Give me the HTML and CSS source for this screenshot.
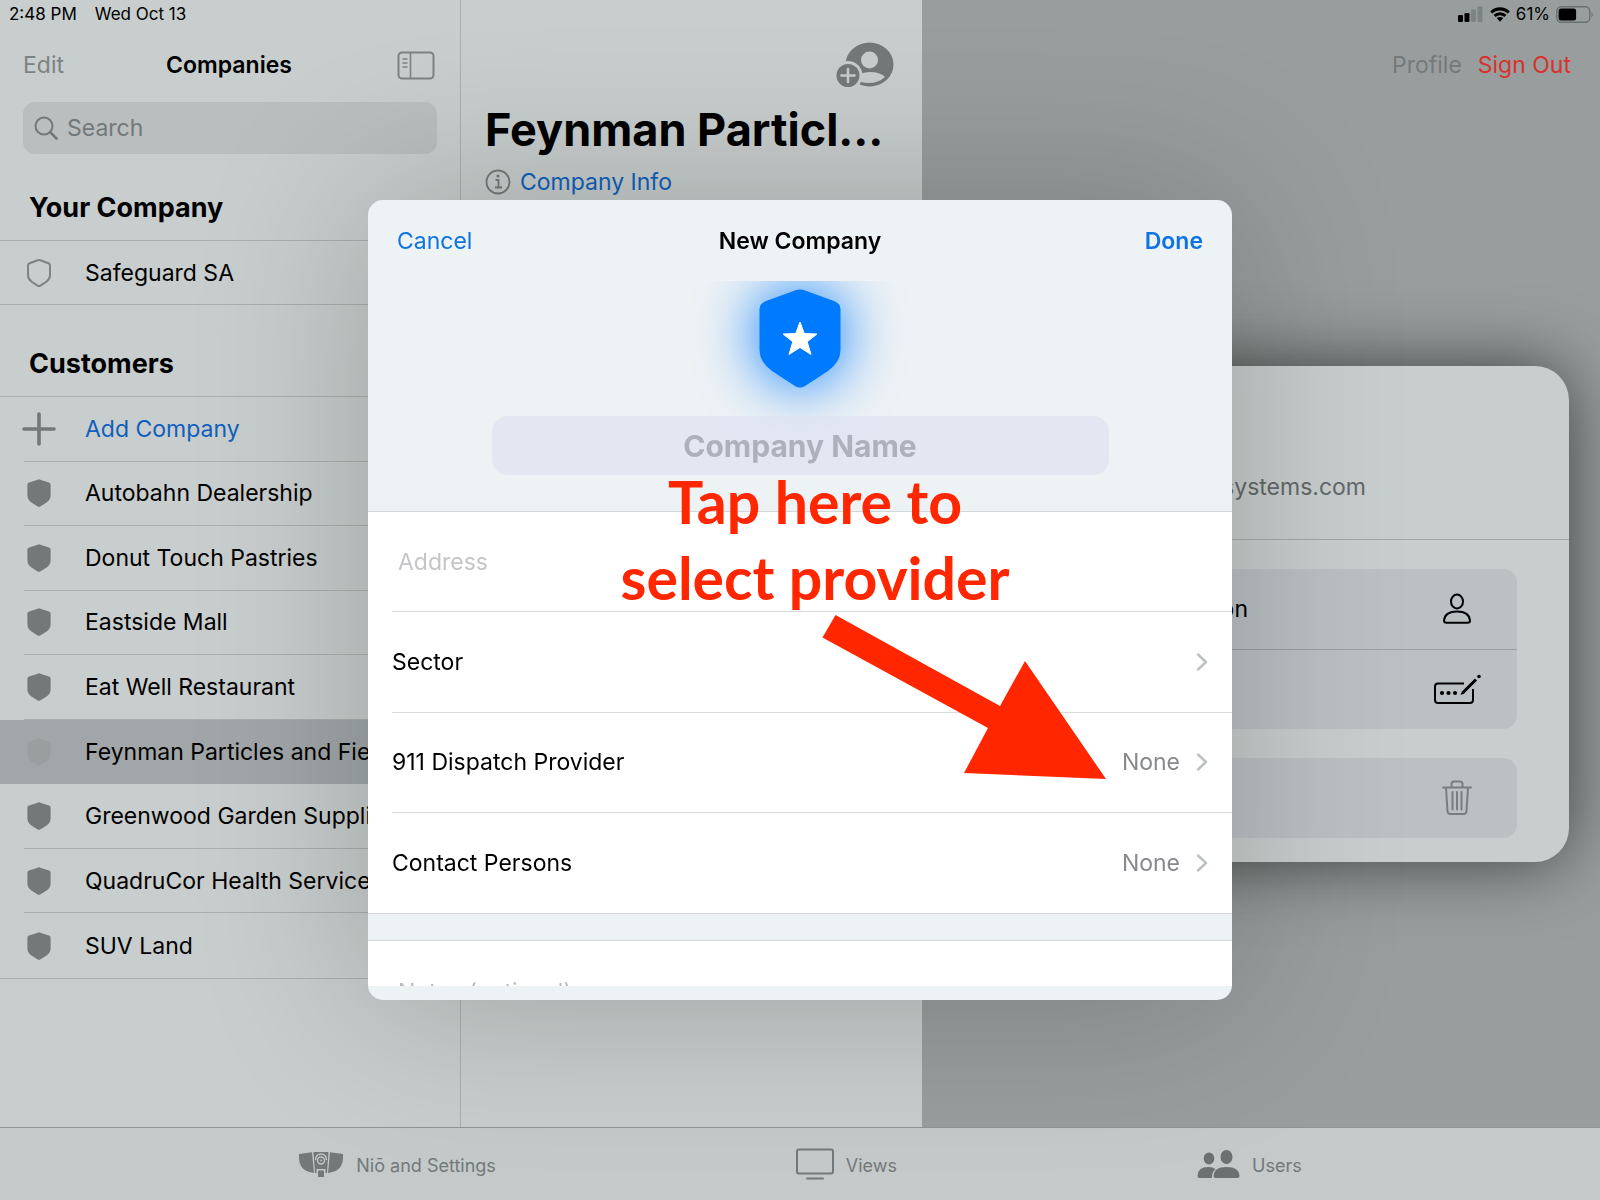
FILE: index.html
```html
<!DOCTYPE html>
<html lang="en">
<head>
<meta charset="utf-8">
<meta name="viewport" content="width=device-width, initial-scale=1">
<title>New Company</title>
<link rel="stylesheet" href="styles.css">
</head>
<body>
<svg class="defs" aria-hidden="true">
  <symbol id="shield" viewBox="0 0 24 28"><path d="M12 0.3Q12.7 0.3 14 0.9L22 3.6Q23.6 4.2 23.6 5.8V16.5Q23.6 20.5 19.6 23.4L13.6 27.2Q12 28.2 10.4 27.2L4.4 23.4Q0.4 20.5 0.4 16.5V5.8Q0.4 4.2 2 3.6L10 0.9Q11.3 0.3 12 0.3Z"/></symbol>
  <symbol id="chevron" viewBox="0 0 12 18"><path d="M2 1.5L10 9L2 16.5" fill="none" stroke="currentColor" stroke-width="2.4" stroke-linecap="round" stroke-linejoin="round"/></symbol>
</svg>
<div class="app">
  <div class="columns">
    <aside class="sidebar">
      <div class="status"><span>2:48 PM</span><span>Wed Oct 13</span></div>
      <div class="navbar">
        <button class="plain muted" type="button">Edit</button>
        <h1 class="nav-title">Companies</h1>
        <button class="plain muted icon-button" type="button" aria-label="Toggle sidebar">
          <svg width="38" height="29" viewBox="0 0 38 29" fill="none" stroke="currentColor" stroke-width="2"><rect x="1.5" y="1.5" width="35" height="26" rx="3.5"/><path d="M13.5 1.5V27.5M5.5 8H10.500M5.500 12H10.500M5.500 16H10.500" stroke-width="1.6"/></svg>
        </button>
      </div>
      <label class="search">
        <svg width="24" height="24" viewBox="0 0 24 24" fill="none" stroke="currentColor" stroke-width="2" stroke-linecap="round"><circle cx="10" cy="10" r="8.500"/><path d="M16.200 16.200L22.500 22.500" stroke-width="2.600"/></svg>
        <input type="search" placeholder="Search" aria-label="Search">
      </label>
      <h2 class="section">Your Company</h2>
      <ul class="list own">
        <li><a class="row" href="#"><svg class="row-icon outline" width="24" height="28" viewBox="0 0 24 28"><path d="M12 1Q12.700 1 14 1.500L21.500 4.200Q23 4.800 23 6.200V16.500Q23 20 19.300 22.800L13.400 26.600Q12 27.500 10.600 26.600L4.700 22.800Q1 20 1 16.500V6.200Q1 4.800 2.500 4.200L10 1.500Q11.300 1 12 1Z"/></svg>Safeguard SA</a></li>
      </ul>
      <h2 class="section">Customers</h2>
      <ul class="list customers">
        <li><a class="row add" href="#"><svg class="row-icon" width="34" height="34" viewBox="0 0 34 34" fill="none" stroke="#737979" stroke-width="3.600" stroke-linecap="round"><path d="M17 2V32M2 17H32"/></svg>Add Company</a></li>
        <li><a class="row" href="#"><svg class="row-icon" width="24" height="28"><use href="#shield"/></svg>Autobahn Dealership</a></li>
        <li><a class="row" href="#"><svg class="row-icon" width="24" height="28"><use href="#shield"/></svg>Donut Touch Pastries</a></li>
        <li><a class="row" href="#"><svg class="row-icon" width="24" height="28"><use href="#shield"/></svg>Eastside Mall</a></li>
        <li><a class="row" href="#"><svg class="row-icon" width="24" height="28"><use href="#shield"/></svg>Eat Well Restaurant</a></li>
        <li class="selected"><a class="row" href="#"><svg class="row-icon" width="24" height="28"><use href="#shield"/></svg>Feynman Particles and Fields</a></li>
        <li><a class="row" href="#"><svg class="row-icon" width="24" height="28"><use href="#shield"/></svg>Greenwood Garden Supplies</a></li>
        <li><a class="row" href="#"><svg class="row-icon" width="24" height="28"><use href="#shield"/></svg>QuadruCor Health Services</a></li>
        <li><a class="row" href="#"><svg class="row-icon" width="24" height="28"><use href="#shield"/></svg>SUV Land</a></li>
      </ul>
    </aside>

    <section class="company">
      <div class="company-bar">
        <button class="plain icon-button add-user" type="button" aria-label="Add user">
          <svg width="58" height="46" viewBox="0 0 58 46"><ellipse cx="33.500" cy="22.500" rx="24" ry="22" fill="#737979"/><circle cx="33.500" cy="18" r="8.500" fill="#c7cccc"/><path d="M18 37Q24 30 34 30Q44 30 49 35Q42 41 33 41Q24 41 18 37Z" fill="#c7cccc"/><circle cx="12" cy="33.500" r="14.500" fill="#c7cccc"/><circle cx="12" cy="33.500" r="11.500" fill="#737979"/><path d="M12 27V40M5.500 33.500H18.500" stroke="#c7cccc" stroke-width="2.600" stroke-linecap="round"/></svg>
        </button>
      </div>
      <h2 class="company-title">Feynman Particl…</h2>
      <a class="info" href="#">
        <svg width="26" height="26" viewBox="0 0 26 26" fill="none" stroke="#737979" stroke-width="1.800"><circle cx="13" cy="13" r="11.500"/><path d="M10.500 11H13.500V18M10 18.500H17"/><circle cx="13" cy="7" r="1.600" fill="#737979" stroke="none"/></svg>
        Company Info
      </a>
    </section>

    <main class="detail">
      <div class="status right">
        <svg width="26" height="16" viewBox="0 0 26 16"><rect x="0" y="9" width="5" height="7" rx="1.200"/><rect x="6.500" y="7" width="5" height="9" rx="1.200"/><rect x="13" y="3.500" width="5" height="12.500" rx="1.200" fill="#7c8383"/><rect x="19.500" y="0.500" width="5" height="15.500" rx="1.200" fill="#7c8383"/></svg>
        <svg width="20" height="15" viewBox="0 0 20 15"><path d="M0.200 4.400Q4.200 0.300 10 0.300T19.800 4.400L17.700 6.600Q14.500 3.400 10 3.400T2.300 6.600Z"/><path d="M3.500 7.800Q6.300 5.200 10 5.200T16.500 7.800L14.400 10Q12.400 8.200 10 8.200T5.600 10Z"/><path d="M6.800 11.100Q8.200 9.900 10 9.900T13.200 11.100L10 14.700Z"/></svg>
        <span>61%</span>
        <svg width="38" height="17" viewBox="0 0 38 17"><rect x="0.800" y="0.800" width="33" height="15.400" rx="4.500" fill="none" stroke="#6a7070" stroke-width="1.400"/><rect x="2.600" y="2.600" width="17.500" height="11.800" rx="2.500"/><path d="M35.500 5.500Q38 8.500 35.500 11.500Z" fill="#6a7070"/></svg>
      </div>
      <div class="account">
        <button class="plain profile" type="button">Profile</button>
        <button class="plain danger" type="button">Sign Out</button>
      </div>
      <div class="card">
        <p class="email">systems.com</p>
        <div class="card-body">
          <div class="group">
            <button class="action" type="button"><span>on</span>
              <svg width="80" height="32" viewBox="-26 0 80 32" fill="none" stroke="#000" stroke-width="2"><ellipse cx="14" cy="8.500" rx="6" ry="7"/><path d="M3.500 29.700Q1 29.700 1 27.500Q2 18.500 14 18.500T27 27.500Q27 29.700 24.500 29.700Z"/></svg>
            </button>
            <button class="action" type="button" aria-label="Change passcode">
              <svg width="80" height="32" viewBox="-16 0 80 32" fill="none" stroke="#000" stroke-width="2"><path d="M31 9.500H5Q2 9.500 2 12.500V26Q2 29 5 29H37Q40 29 40 26V15"/><path d="M30 18.500L43 5.500" stroke-width="3"/><g fill="#000" stroke="none"><circle cx="9" cy="19" r="2.100"/><circle cx="15.500" cy="19" r="2.100"/><circle cx="22" cy="19" r="2.100"/><path d="M27.500 20.800L29 17.200L31.500 19.700Z"/><circle cx="46" cy="2.500" r="1.800"/></g></svg>
            </button>
          </div>
          <div class="group">
            <button class="action" type="button" aria-label="Delete">
              <svg width="80" height="36" viewBox="-25 0 80 36" fill="none" stroke="#787e80" stroke-width="2"><path d="M1 7.500H29M9.500 7V4Q9.500 1.500 12 1.500H18Q20.500 1.500 20.500 4V7M4 8L5.500 31Q5.700 34 8.500 34H21.500Q24.300 34 24.500 31L26 8M10.500 12V29.500M15 12V29.500M19.500 12V29.500" stroke-linecap="round"/></svg>
            </button>
          </div>
        </div>
      </div>
    </main>
  </div>

  <nav class="tabbar">
    <a class="tab" href="#">
      <svg width="46" height="27" viewBox="0 0 46 27"><path d="M1 3L14 1.200L16 22Q6 20.500 3 15Q0.500 10 1 3ZM45 3L32 1.200L30 22Q40 20.500 43 15Q45.500 10 45 3ZM15.500 1H30.500L29 22H27.500V18H18.500V22H17ZM20 19.500H26V26H20Z" fill="#737979"/><g fill="none" stroke="#c1c6c6" stroke-width="1.400"><circle cx="23" cy="9.500" r="3.500"/><path d="M17.500 9Q18 3 23 3T28.500 9"/><path d="M23 8.500V10.500"/></g></svg>
      <span>Niō and Settings</span>
    </a>
    <a class="tab" href="#">
      <svg width="38" height="32" viewBox="0 0 38 32" fill="none" stroke="currentColor" stroke-width="2"><rect x="1" y="1.500" width="36" height="24" rx="2"/><path d="M11 30.500H27" stroke-linecap="round"/></svg>
      <span>Views</span>
    </a>
    <a class="tab" href="#">
      <svg width="43" height="30" viewBox="0 0 43 30" fill="#6b7171"><ellipse cx="12" cy="9.500" rx="5.300" ry="6"/><path d="M0.500 27Q0.500 18 11.500 18Q16 18 18.500 20Q15 23 14.800 29H2.500Q0.500 29 0.500 27Z"/><ellipse cx="29.500" cy="8" rx="6" ry="7"/><path d="M16.500 27Q17 18 29.500 18T42.500 27Q42.500 29 40.500 29H18.500Q16.500 29 16.500 27Z"/></svg>
      <span>Users</span>
    </a>
  </nav>
</div>

<div class="backdrop">
  <form class="modal" role="dialog" aria-labelledby="modal-title">
    <header class="modal-bar">
      <button class="plain link" type="button">Cancel</button>
      <h2 class="modal-title" id="modal-title">New Company</h2>
      <button class="plain link done" type="button">Done</button>
    </header>
    <div class="modal-scroll">
      <div class="hero">
        <svg class="badge" width="82" height="99" viewBox="0 0 82 99"><path d="M36 1.500Q41 -0.500 46 1.500L75 12Q81.500 14.500 81.500 20V61Q81.500 73 69 82L46 97Q41 100 36 97L13 82Q0.500 73 0.500 61V20Q0.500 14.500 7 12Z" fill="#007aff"/><path d="M41 33L45.300 44.500L58 45L48.200 52.700L52 65.500L41 58.500L30 65.500L33.800 52.700L24 45L36.700 44.500Z" fill="#fff" stroke="#fff" stroke-width="1" stroke-linejoin="round"/></svg>
        <input class="name" type="text" placeholder="Company Name" aria-label="Company Name">
      </div>
      <div class="fields">
        <div class="field"><input class="address" type="text" placeholder="Address" aria-label="Address"></div>
        <button class="field" type="button"><span class="label">Sector</span><svg class="chevron" width="12" height="18"><use href="#chevron"/></svg></button>
        <button class="field" type="button"><span class="label">911 Dispatch Provider</span><span class="value">None</span><svg class="chevron" width="12" height="18"><use href="#chevron"/></svg></button>
        <button class="field" type="button"><span class="label">Contact Persons</span><span class="value">None</span><svg class="chevron" width="12" height="18"><use href="#chevron"/></svg></button>
      </div>
      <textarea class="notes" placeholder="Notes (optional)" aria-label="Notes"></textarea>
    </div>
    <p class="callout">Tap here to<br>select provider</p>
    <svg class="arrow" width="284" height="165" viewBox="822 614 284 165" aria-hidden="true"><path d="M835.500 615L1000 706L1025 661L1106 779L964 773L988 728L822.500 637.500Z" fill="#ff2600"/></svg>
  </form>
</div>
</body>
</html>
```
FILE: styles.css
```css
* { box-sizing: border-box; }

body {
  margin: 0;
  font-family: Inter, "Liberation Sans", sans-serif;
  font-size: 23px;
  line-height: 30px;
  color: #000;
  background: #c8cdcd;
}

h1, h2, p, ul { margin: 0; padding: 0; }
ul { list-style: none; }
a { color: inherit; text-decoration: none; }
svg { display: block; flex: none; }
button, input, textarea { font: inherit; color: inherit; border: 0; background: none; margin: 0; padding: 0; outline: 0; }
input::placeholder, textarea::placeholder { color: inherit; opacity: 1; }
.defs { position: absolute; width: 0; height: 0; }

.app { display: flex; flex-direction: column; min-height: 100vh; }
.columns { flex: 1; display: grid; grid-template-columns: 461px 461px 1fr; }

.status {
  display: flex;
  align-items: center;
  gap: 18px;
  height: 28px;
  padding: 0 9px;
  font-size: 17px;
}
.status.right { justify-content: flex-end; gap: 6px; padding: 0 6px; }

.plain { cursor: pointer; }
.muted { color: #7d8383; }

/* Companies list */
.sidebar { border-right: 1px solid #aab0af; overflow: hidden; }
.navbar {
  display: grid;
  grid-template-columns: 1fr auto 1fr;
  align-items: center;
  height: 74px;
  padding: 0 25px 0 23px;
}
.navbar > :first-child { justify-self: start; }
.navbar > :last-child { justify-self: end; }
.nav-title { font-size: 23px; font-weight: 600; }
.search {
  display: flex;
  align-items: center;
  gap: 9px;
  height: 52px;
  margin: 0 23px;
  padding: 0 11px;
  border-radius: 12px;
  background: #b9bebf;
  color: #737979;
}
.search input { flex: 1; min-width: 0; }
.section {
  display: flex;
  align-items: flex-end;
  height: 86px;
  padding: 0 29px 14px;
  font-size: 27px;
  line-height: 36px;
  font-weight: 700;
}
.own + .section { height: 91px; }
.list { display: grid; grid-auto-rows: 1fr; border-top: 1px solid #a9afae; border-bottom: 1px solid #a9afae; }
.own { min-height: 65px; }
.customers { min-height: 583px; }
.customers li { display: grid; }
.row {
  display: grid;
  grid-template-columns: 30px 1fr;
  gap: 31px;
  align-items: center;
  height: 100%;
  margin-left: 24px;
  white-space: nowrap;
  border-bottom: 1px solid #a9afae;
}
li:last-child > .row { border-bottom: 0; }
.row-icon { justify-self: center; fill: #737979; overflow: visible; }
.row-icon.outline { fill: none; stroke: #7d8383; stroke-width: 2; }
.add { color: #0f60bd; }
.selected { background: #a1a7a9; }
.selected .row { border-color: transparent; }
.selected .row-icon { fill: #999f9f; }

/* Selected company */
.company { padding: 0 28px 0 24px; min-width: 0; }
.company-bar { display: flex; justify-content: flex-end; padding: 42px 0 13px; }
.company-title {
  font-size: 45px;
  line-height: 58px;
  font-weight: 700;
  white-space: nowrap;
}
.info { display: flex; align-items: center; gap: 9px; padding-top: 8px; color: #0f60bd; }

/* Account */
.detail { background: #989e9e; min-width: 0; }
.account { display: flex; justify-content: flex-end; align-items: center; gap: 16px; height: 74px; padding-right: 29px; }
.profile { color: #747a7a; }
.danger { color: #d8322d; }
.card {
  margin: 264px 31px 0;
  border-radius: 34px;
  background: #c8cdcd;
  box-shadow: 0 0 70px rgba(0, 0, 0, .6);
}
.email { height: 174px; padding: 106px 203px 0 0; text-align: right; color: #636969; border-bottom: 1px solid #a3a9a9; }
.card-body { display: grid; gap: 29px; padding: 29px 52px 24px; }
.group { border-radius: 14px; background: #bbc0c3; }
.action { display: flex; align-items: center; justify-content: flex-end; gap: 169px; width: 100%; height: 80px; padding-right: 20px; }
.action + .action { border-top: 1px solid #9ba1a2; }

/* Tab bar */
.tabbar {
  display: flex;
  justify-content: center;
  align-items: center;
  gap: 300px;
  height: 73px;
  border-top: 1px solid #8f9595;
  background: #c4c9c9;
  color: #737979;
  font-size: 18px;
}
.tab { display: flex; align-items: center; gap: 12px; }
.tab span { padding-top: 4px; }

/* New company dialog */
.backdrop { position: fixed; inset: 0; display: grid; place-items: center; }
.modal {
  position: relative;
  display: flex;
  flex-direction: column;
  width: 54%;
  min-width: 640px;
  height: 800px;
  padding-bottom: 14px;
  border-radius: 15px;
  background: #edf2f5;
  box-shadow: 0 0 170px rgba(10, 14, 0, .22);
}
.modal-bar {
  display: grid;
  grid-template-columns: 1fr auto 1fr;
  align-items: center;
  height: 81px;
  padding: 0 29px;
}
.modal-bar > :first-child { justify-self: start; }
.modal-bar > :last-child { justify-self: end; }
.modal-title { font-size: 23px; font-weight: 600; }
.link { color: #0f74e0; }
.done { font-weight: 600; }
.modal-scroll { flex: 1; min-height: 0; overflow: hidden; }
.hero { display: flex; flex-direction: column; align-items: center; gap: 28px; padding: 8px 0 36px; }
.badge { overflow: visible; filter: drop-shadow(0 0 30px rgba(0, 122, 255, 1)); }
.name {
  width: 617px;
  max-width: 90%;
  height: 59px;
  border-radius: 16px;
  background: rgba(222, 224, 240, .66);
  color: #aeb1bb;
  font-size: 30px;
  font-weight: 700;
  text-align: center;
  position: relative;
}
.fields { display: grid; grid-auto-rows: 1fr; height: 403px; padding-left: 24px; background: #fff; border-top: 1px solid #d3d8da; border-bottom: 1px solid #d3d8da; }
.field { display: flex; align-items: center; gap: 16px; padding-right: 24px; text-align: left; border-bottom: 1px solid #d9dcdd; }
.field:last-child { border-bottom: 0; }
.label { flex: 1; }
.value { color: #87898d; }
.chevron { color: #bcc1c2; }
.address { flex: 1; padding-left: 6px; color: #c3c5c7; }
.notes {
  display: block;
  width: 100%;
  height: 80px;
  margin-top: 26px;
  padding: 36px 30px 0;
  border-top: 1px solid #d3dadc;
  background: #fff;
  color: #b9bcbf;
  resize: none;
}

/* Hint drawn over the dialog */
.callout {
  position: absolute;
  top: 264px;
  left: 15px;
  width: 100%;
  text-align: center;
  font-family: Lato, "Open Sans", sans-serif;
  font-size: 59px;
  line-height: 76px;
  font-weight: 700;
  color: #ff2600;
  pointer-events: none;
}
.arrow { position: absolute; top: 414px; left: 454px; pointer-events: none; }
```
